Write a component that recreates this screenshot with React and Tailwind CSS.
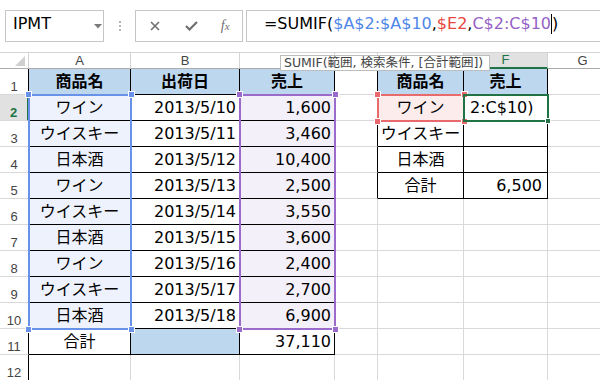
import React from 'react';

const widths = ['w-[29px]', 'w-[102px]', 'w-[109px]', 'w-[95px]', 'w-[43px]', 'w-[86px]', 'w-[84px]', 'w-[70px]'];
// C, D and E header letters sit under the function tooltip
const letters = ['', 'A', 'B', '', '', '', 'F', 'G'];

const rows = [
  ['商品名', '出荷日', '売上', '', '商品名', '売上', ''],
  ['ワイン', '2013/5/10', '1,600', '', 'ワイン', '2:C$10)', ''],
  ['ウイスキー', '2013/5/11', '3,460', '', 'ウイスキー', '', ''],
  ['日本酒', '2013/5/12', '10,400', '', '日本酒', '', ''],
  ['ワイン', '2013/5/13', '2,500', '', '合計', '6,500', ''],
  ['ウイスキー', '2013/5/14', '3,550', '', '', '', ''],
  ['日本酒', '2013/5/15', '3,600', '', '', '', ''],
  ['ワイン', '2013/5/16', '2,400', '', '', '', ''],
  ['ウイスキー', '2013/5/17', '2,700', '', '', '', ''],
  ['日本酒', '2013/5/18', '6,900', '', '', '', ''],
  ['合計', '', '37,110', '', '', '', ''],
  ['', '', '', '', '', '', ''],
];

const cellFont = { fontFamily: '"DejaVu Sans", "Noto Sans CJK JP", sans-serif' };

function Cell({ r, c, text }) {
  const t1 = c >= 1 && c <= 3 && r <= 11;
  const t2 = (c === 5 || c === 6) && r <= 5;
  const blackRight = t1 || t2 || (c === 4 && r <= 5);
  const blackBottom = t1 || t2;

  let bg = 'bg-white';
  if (r === 1 && (t1 || t2)) bg = 'bg-[#bdd7ee]';
  else if (r === 11 && c === 2) bg = 'bg-[#bdd7ee]';
  else if (c === 1 && r >= 2 && r <= 10) bg = 'bg-[#eef2fc]';
  else if (c === 3 && r >= 2 && r <= 10) bg = 'bg-[#f4f0f9]';
  else if (c === 5 && r === 2) bg = 'bg-[#fcecec]';

  let align = 'justify-center';
  if (r > 1 && (c === 2 || c === 3)) align = 'justify-end pr-[3px]';
  if (c === 6 && r === 2) align = 'justify-start pl-[6px]';
  if (c === 6 && r === 5) align = 'justify-end pr-[5px]';

  return (
    <div
      className={`${widths[c]} shrink-0 h-[26px] flex ${align} ${bg} border-r border-b ${
        blackRight ? 'border-r-black' : 'border-r-[#d9d9d9]'
      } ${blackBottom ? 'border-b-black' : 'border-b-[#d9d9d9]'} text-[16px] leading-[25px] text-black whitespace-nowrap overflow-visible ${
        r === 1 ? 'font-bold' : ''
      }`}
      style={cellFont}
    >
      {text}
    </div>
  );
}

function RowHead({ r }) {
  const sel = r === 2;
  return (
    <div
      className={`w-[29px] shrink-0 h-[26px] flex items-end justify-center pb-[1px] border-b border-b-[#d9d9d9] ${
        sel ? 'bg-[#e1e1e1] border-r-2 border-r-[#217346] text-[#217346] font-bold' : 'bg-white border-r border-r-black text-[#444]'
      } ${r > 11 ? 'border-r-[#c6c6c6]' : ''} text-[13px] leading-none`}
      style={{ fontFamily: '"Liberation Sans", sans-serif' }}
    >
      {r}
    </div>
  );
}

function Handle({ className }) {
  return <div className={`absolute w-[7px] h-[7px] border border-white ${className}`} />;
}

function RefBox({ pos, border, fill }) {
  return (
    <div className={`absolute ${pos}`}>
      <div className={`absolute inset-0 border-2 ${border}`} />
      <Handle className={`-left-[3px] -top-[3px] ${fill}`} />
      <Handle className={`-right-[3px] -top-[3px] ${fill}`} />
      <Handle className={`-left-[3px] -bottom-[3px] ${fill}`} />
      <Handle className={`-right-[3px] -bottom-[3px] ${fill}`} />
    </div>
  );
}

export default function App() {
  return (
    <div className="relative w-[600px] h-[380px] overflow-hidden bg-white">
      {/* formula bar */}
      <div className="h-[52px] flex items-start pt-[10px] pl-[5px]">
        <div
          className="w-[101px] h-[32px] border border-[#c6c6c6] flex items-start pt-[5px] pl-[7px] relative text-[16px] leading-none text-black"
          style={cellFont}
        >
          IPMT
          <svg className="absolute left-[88px] top-[13px]" width="8" height="5" viewBox="0 0 8 5">
            <path d="M0 0 L8 0 L4 4.5 Z" fill="#7a7a7a" />
          </svg>
        </div>
        <div className="w-[31px] h-[32px] flex flex-col items-center justify-center gap-[2px]">
          <div className="w-[2px] h-[2px] bg-[#b5b5b5]" />
          <div className="w-[2px] h-[2px] bg-[#b5b5b5]" />
          <div className="w-[2px] h-[2px] bg-[#b5b5b5]" />
        </div>
        <div className="w-[110px] h-[32px] border border-[#c6c6c6] flex items-center">
          <svg className="ml-[14px]" width="10" height="10" viewBox="0 0 10 10">
            <path d="M1 1 L9 9 M9 1 L1 9" stroke="#6f6f6f" strokeWidth="1.6" />
          </svg>
          <svg className="ml-[25px]" width="13" height="10" viewBox="0 0 13 10">
            <path d="M1 5 L4.5 8.5 L12 1" stroke="#6f6f6f" strokeWidth="2.2" fill="none" />
          </svg>
          <span
            className="ml-[23px] italic text-[#6f6f6f] text-[14px] leading-none"
            style={{ fontFamily: '"Liberation Serif", serif' }}
          >
            f<span className="text-[11px]">x</span>
          </span>
        </div>
        <div
          className="ml-[3px] w-[360px] h-[32px] border border-[#c6c6c6] border-r-0 flex items-start pt-[5px] pl-[17px] text-[16px] leading-none text-black whitespace-nowrap"
          style={cellFont}
        >
          <span>=SUMIF(</span>
          <span className="text-[#4f86e8]">$A$2:$A$10</span>
          <span>,</span>
          <span className="text-[#e8463f]">$E2</span>
          <span>,</span>
          <span className="text-[#9561c6]">C$2:C$10</span>
          <span className="w-px h-[20px] -mt-[2px] bg-black" />
          <span>)</span>
        </div>
      </div>

      {/* column headers */}
      <div className="flex h-[17px]" style={{ fontFamily: '"Liberation Sans", sans-serif' }}>
        {letters.map((l, i) => (
          <div
            key={i}
            className={`${widths[i]} shrink-0 h-[17px] flex items-end justify-center text-[13px] leading-none border-t border-t-[#d4d4d4] ${
              l === 'F'
                ? 'bg-[#e1e1e1] text-[#217346] border-b-2 border-b-[#217346] border-r border-r-[#d4d4d4] pb-[1px]'
                : 'bg-white text-[#444] border-b border-b-[#ababab] border-r border-r-[#d4d4d4] pb-[1px]'
            } relative`}
          >
            {i === 0 ? (
              <svg className="absolute right-[3px] bottom-[2px]" width="10" height="10" viewBox="0 0 10 10">
                <path d="M10 0 L10 10 L0 10 Z" fill="#d0d0d0" />
              </svg>
            ) : (
              l
            )}
          </div>
        ))}
      </div>

      {/* grid */}
      <div className="flex flex-col">
        {rows.map((row, ri) => (
          <div key={ri} className="flex">
            <RowHead r={ri + 1} />
            {row.map((text, ci) => (
              <Cell key={ci} r={ri + 1} c={ci + 1} text={text} />
            ))}
          </div>
        ))}
      </div>

      {/* range references */}
      <RefBox pos="left-[28px] top-[94px] w-[104px] h-[236px]" border="border-[#6792e8]" fill="bg-[#6792e8]" />
      <RefBox pos="left-[239px] top-[94px] w-[97px] h-[236px]" border="border-[#9a6bcb]" fill="bg-[#9a6bcb]" />
      <RefBox pos="left-[377px] top-[94px] w-[88px] h-[28px]" border="border-[#e86a6c]" fill="bg-[#e86a6c]" />
      <div className="absolute left-[463px] top-[94px] w-[86px] h-[28px] border-2 border-[#217346]">
        <div className="absolute -right-[4px] -bottom-[4px] w-[6px] h-[6px] bg-[#217346] border border-white" />
      </div>

      {/* tooltip */}
      <div
        className="absolute left-[280px] top-[55px] w-[210px] h-[16px] bg-white border border-[#bdbdbd] flex items-center pl-[3px] text-[12.5px] leading-none text-[#444] whitespace-nowrap"
        style={cellFont}
      >
        SUMIF(範囲, 検索条件, [合計範囲])
      </div>
    </div>
  );
}
